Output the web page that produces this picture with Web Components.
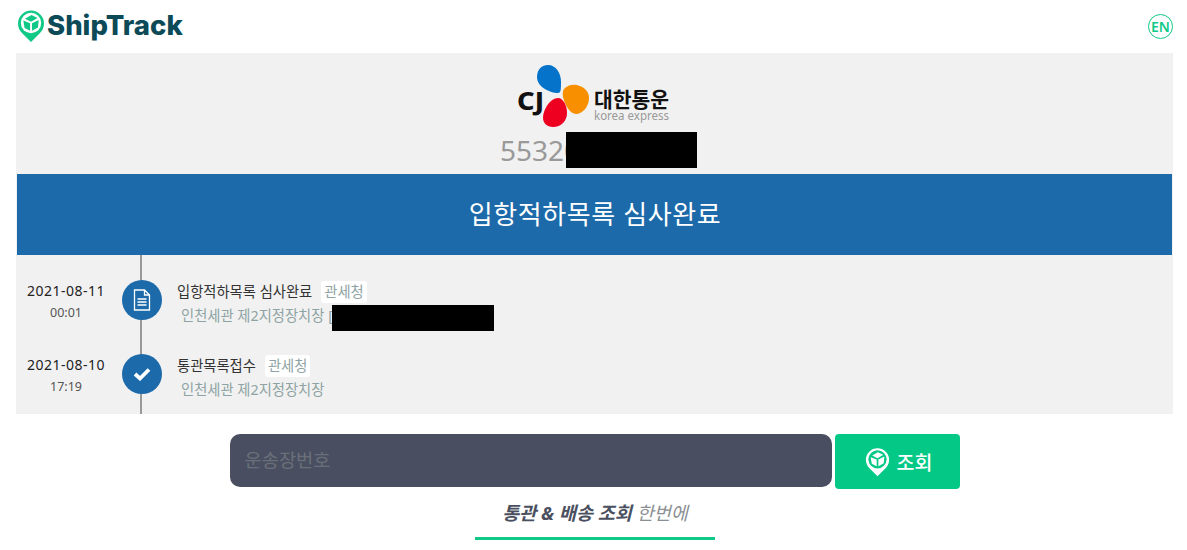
<!DOCTYPE html>
<html lang="ko">
<head>
<meta charset="utf-8">
<title>ShipTrack</title>
<style>
  html, body { margin: 0; background: #fff; overflow: hidden; }
  body { font-family: "Noto Sans", "Noto Sans CJK KR", sans-serif; }
</style>
</head>
<body>
<ship-header></ship-header>
<track-panel number="55320" status="입항적하목록 심사완료">
  <track-event date="2021-08-11" time="00:01" title="입항적하목록 심사완료" place="인천세관 제2지정장치장" icon="doc" redact></track-event>
  <track-event date="2021-08-10" time="17:19" title="통관목록접수" place="인천세관 제2지정장치장" icon="check"></track-event>
</track-panel>
<search-bar></search-bar>
<ship-tagline></ship-tagline>

<script>
const FONT = `"Noto Sans", "Noto Sans CJK KR", sans-serif`;

class PinIcon extends HTMLElement {
  constructor() {
    super();
    this.attachShadow({ mode: "open" });
  }

  connectedCallback() {
    this.shadowRoot.innerHTML = `
      <style>
        :host { display: block; color: var(--pin, #10c987); }
        svg { display: block; width: 100%; height: 100%; }
      </style>
      <svg viewBox="0 0 28 32">
        <path fill="currentColor" d="M14 32 5 22.9A13 13 0 1 1 23 22.9Z"/>
        <circle cx="14" cy="13" r="10.200" fill="var(--pin-bg, #fff)"/>
        <path fill="currentColor" d="M6.300 10.600 13.100 13.300V20.800L7.600 18ZM15 13.300 21.700 9.900 21 17.500 15 20.800ZM8 8.700 14.500 5 20.500 8 14 11.700Z"/>
      </svg>
    `;
  }
}

class ShipHeader extends HTMLElement {
  constructor() {
    super();
    this.attachShadow({ mode: "open" });
  }

  connectedCallback() {
    this.shadowRoot.innerHTML = `
      <style>
        :host { display: flex; align-items: center; justify-content: space-between; height: 53px; padding: 0 14px 0 17px; }
        .brand { display: flex; align-items: center; gap: 2px; margin-top: -1px; }
        pin-icon { width: 28px; height: 32px; }
        .name { font: 800 27.500px/1 Inter, sans-serif; color: #0b4a56; }
        .lang {
          box-sizing: border-box; width: 25px; height: 25px; border: 1.5px solid #10c987; border-radius: 50%;
          display: flex; align-items: center; justify-content: center;
          font: 600 14px/1 ${FONT}; color: #10c987;
        }
      </style>
      <div class="brand"><pin-icon></pin-icon><span class="name">ShipTrack</span></div>
      <div class="lang">EN</div>
    `;
  }
}

class CarrierLogo extends HTMLElement {
  constructor() {
    super();
    this.attachShadow({ mode: "open" });
  }

  connectedCallback() {
    this.shadowRoot.innerHTML = `
      <style>
        :host { display: block; width: 175px; height: 63px; margin-right: -20px; }
        svg { display: block; }
        text { font-family: ${FONT}; }
      </style>
      <svg width="175" height="63" viewBox="0 0 175 63">
        <path fill="#0473c9" d="M41 28C33 28 20 22 20 12 20 4 25 0 31 0 39 0 44 8 44 17 44 24 44 28 41 28Z"/>
        <path fill="#f78f00" d="M47 24C50 20 56 19 60 20 68 22 72 27 72 33 72 42 65 49 59 49 53 49 48 40 46 32 45.500 29 45.500 26 47 24Z"/>
        <path fill="#ee0020" d="M41 33C46 33 50 40 50 48 50 56 44 62 36 62 30 62 26 58 26 53 26 45 33 33 41 33Z"/>
        <text x="0" y="45" font-size="25" font-weight="800" fill="#111" textLength="27" lengthAdjust="spacingAndGlyphs">CJ</text>
        <text x="77" y="42" font-size="21" font-weight="700" fill="#111" textLength="75" lengthAdjust="spacingAndGlyphs">대한통운</text>
        <text x="77" y="55" font-size="13" fill="#999" textLength="75" lengthAdjust="spacingAndGlyphs">korea express</text>
      </svg>
    `;
  }
}

class TrackPanel extends HTMLElement {
  constructor() {
    super();
    this.attachShadow({ mode: "open" });
  }

  connectedCallback() {
    this.shadowRoot.innerHTML = `
      <style>
        :host { display: block; margin: 0 14px 0 16px; background: #f1f1f1; border: solid #f1f1f1; border-width: 0 1px; height: 361px; font-family: ${FONT}; }
        .top { height: 121px; display: flex; flex-direction: column; align-items: center; padding-top: 12px; box-sizing: border-box; }
        .num { position: relative; align-self: flex-start; margin: 4px 0 0 483px; font-size: 28px; line-height: 36px; color: #999; }
        .num i { position: absolute; left: 66px; top: 0; width: 131px; height: 36px; background: #000; }
        .band { height: 81px; padding: 0 0 3px 1px; box-sizing: border-box; background: #1c6aa9; color: #fff; display: flex; align-items: center; justify-content: center; font-size: 26px; letter-spacing: 0.6px; }
        .list { height: 159px; padding-top: 25px; box-sizing: border-box; background: linear-gradient(#999, #999) no-repeat 123px 0 / 2px 100%; display: flex; flex-direction: column; gap: 34px; }
      </style>
      <div class="top">
        <carrier-logo></carrier-logo>
        <div class="num">${this.getAttribute("number")}<i></i></div>
      </div>
      <div class="band">${this.getAttribute("status")}</div>
      <div class="list"><slot></slot></div>
    `;
  }
}

const ICONS = {
  doc: `<svg width="18" height="22" viewBox="0 0 18 22" fill="none" stroke="#fff" stroke-width="1.300">
      <path d="M1.500 1h10l5 5v15h-15Z"/><path d="M11.500 1v5h5"/>
      <path d="M4.500 10h9M4.500 13h9M4.500 16h9" stroke-width="1.500"/></svg>`,
  check: `<svg width="18" height="14" viewBox="0 0 18 14"><path fill="none" stroke="#fff" stroke-width="3.800" d="M2 7l5 4.500L16 2.500"/></svg>`
};

class TrackEvent extends HTMLElement {
  constructor() {
    super();
    this.attachShadow({ mode: "open" });
  }

  connectedCallback() {
    const a = n => this.getAttribute(n);
    this.shadowRoot.innerHTML = `
      <style>
        :host { display: grid; grid-template-columns: 105px 40px 1fr; height: 40px; font-family: ${FONT}; }
        .when { text-align: center; width: 98px; color: #222; margin-top: 1px; }
        .date { font-size: 14px; line-height: 20px; letter-spacing: 0.5px; }
        .time { font-size: 12.500px; line-height: 20px; margin-top: 2px; color: #555; }
        .dot { width: 40px; height: 40px; border-radius: 50%; background: #1c6aa9; display: flex; align-items: center; justify-content: center; }
        .what { padding-left: 15px; margin-top: 1px; }
        .title { display: flex; align-items: center; gap: 9px; font-size: 14.300px; line-height: 22px; color: #333; }
        .tag { background: #fff; border-radius: 3px; padding: 0 3px; color: #8ea3a3; }
        .place { position: relative; padding-left: 4px; font-size: 14.300px; line-height: 20px; margin-top: 3px; color: #8ea3a3; white-space: nowrap; }
        .place i { position: absolute; left: 155px; top: -1px; width: 162px; height: 26px; background: #000; }
      </style>
      <div class="when"><div class="date">${a("date")}</div><div class="time">${a("time")}</div></div>
      <div class="dot">${ICONS[a("icon")]}</div>
      <div class="what">
        <div class="title"><span>${a("title")}</span><span class="tag">관세청</span></div>
        <div class="place">${a("place")}${this.hasAttribute("redact") ? " [<i></i>" : ""}</div>
      </div>
    `;
  }
}

class SearchBar extends HTMLElement {
  constructor() {
    super();
    this.attachShadow({ mode: "open" });
  }

  connectedCallback() {
    this.shadowRoot.innerHTML = `
      <style>
        :host { display: flex; justify-content: center; gap: 3px; margin: 20px 227px 0 230px; height: 54px; font-family: ${FONT}; }
        input {
          flex: none; width: 602px; box-sizing: border-box; height: 53px; border: 0; border-radius: 10px; outline: 0;
          background: #494f60; padding: 0 14.500px 2px; font: 18.700px ${FONT}; color: #fff;
        }
        input::placeholder { color: #6b6f7a; opacity: 1; }
        button {
          flex: none; width: 125px; height: 55px; border: 0; border-radius: 4px; background: #04c986; color: #fff;
          display: flex; align-items: center; justify-content: center; gap: 7px; font: 500 19.500px ${FONT}; padding: 0 0 1px 2px;
          --pin: #fff; --pin-bg: #04c986;
        }
        pin-icon { width: 25px; height: 30px; margin-top: 1px; }
      </style>
      <input placeholder="운송장번호">
      <button type="button"><pin-icon></pin-icon>조회</button>
    `;
  }
}

class ShipTagline extends HTMLElement {
  constructor() {
    super();
    this.attachShadow({ mode: "open" });
  }

  connectedCallback() {
    this.shadowRoot.innerHTML = `
      <style>
        :host { display: block; width: 240px; margin: 13px 0 0 475px; border-bottom: 3px solid #10c987; height: 36px; text-align: center; font: italic 18.500px/24px ${FONT}; color: #8b8f93; white-space: nowrap; }
        b { color: #4a5060; font-weight: 700; }
      </style>
      <b>통관 &amp; 배송 조회</b> 한번에
    `;
  }
}

customElements.define("pin-icon", PinIcon);
customElements.define("ship-header", ShipHeader);
customElements.define("carrier-logo", CarrierLogo);
customElements.define("track-panel", TrackPanel);
customElements.define("track-event", TrackEvent);
customElements.define("search-bar", SearchBar);
customElements.define("ship-tagline", ShipTagline);
</script>
</body>
</html>
